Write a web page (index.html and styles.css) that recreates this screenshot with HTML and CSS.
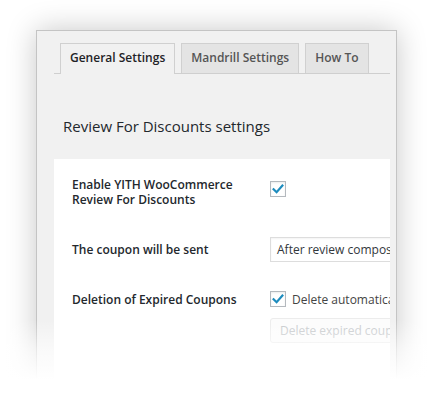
FILE: index.html
```html
<!DOCTYPE html>
<html>
<head>
<meta charset="utf-8">
<link rel="stylesheet" href="styles.css">
</head>
<body>
<div class="stage">
  <div class="panel">
    <nav class="tabs">
      <span class="tab active">General Settings</span>
      <span class="tab">Mandrill Settings</span>
      <span class="tab">How To</span>
    </nav>
    <h2 class="title">Review For Discounts settings</h2>
    <div class="box">
      <div class="row row-first">
        <div class="label">Enable YITH WooCommerce Review For Discounts</div>
        <div class="field">
          <span class="check"><svg viewBox="0 0 16 16" width="16" height="16"><path d="M3.6 8.2 L6.6 11.2 L12.4 4.6" fill="none" stroke="#1e8cbe" stroke-width="2.2" stroke-linecap="square"/></svg></span>
        </div>
      </div>
      <div class="row row-select">
        <div class="label">The coupon will be sent</div>
        <div class="field">
          <div class="select">After review composed</div>
        </div>
      </div>
      <div class="row row-last">
        <div class="label">Deletion of Expired Coupons</div>
        <div class="field">
          <div class="checkline">
            <span class="check"><svg viewBox="0 0 16 16" width="16" height="16"><path d="M3.6 8.2 L6.6 11.2 L12.4 4.6" fill="none" stroke="#1e8cbe" stroke-width="2.2" stroke-linecap="square"/></svg></span>
            <span class="checktext">Delete automatically expired coupons</span>
          </div>
          <div class="btn">Delete expired coupons</div>
        </div>
      </div>
    </div>
  </div>
  <div class="fade"></div>
</div>
</body>
</html>
```

FILE: styles.css
```css
html, body {
  margin: 0;
  padding: 0;
  background: #fff;
}
body {
  font-family: "Open Sans", "Noto Sans", sans-serif;
  color: #23282d;
}
.stage {
  position: relative;
  width: 434px;
  height: 416px;
  overflow: hidden;
  padding: 30px 0 0 36px;
  box-sizing: border-box;
}
.panel {
  width: 359px;
  height: 420px;
  border: 1px solid #c4c4c4;
  background: #f1f1f1;
  box-shadow: 0 0 28px rgba(0, 0, 0, 0.22);
}
.tabs {
  display: flex;
  gap: 6px;
  margin: 12px 6px 0 17px;
  padding-left: 6px;
  border-bottom: 1px solid #cfcfcf;
  height: 30px;
}
.tab {
  display: block;
  box-sizing: border-box;
  height: 30px;
  padding: 0 9px;
  font-size: 12px;
  font-weight: 600;
  line-height: 28px;
  color: #555;
  background: #e4e4e4;
  border: 1px solid #d0d0d0;
  border-bottom: none;
}
.tab.active {
  color: #1f2327;
  background: #f1f1f1;
  height: 31px;
}
.title {
  margin: 41px 0 0 26px;
  font-size: 15px;
  font-weight: 400;
  line-height: 22px;
  color: #23282d;
}
.box {
  margin: 22px 6px 0 17px;
  height: 260px;
  background: #fff;
  padding: 18px 0 0 18px;
  box-sizing: border-box;
  overflow: hidden;
}
.row {
  display: flex;
}
.label {
  width: 180px;
  flex: none;
  font-size: 12px;
  font-weight: 600;
  line-height: 15px;
  color: #23282d;
}
.field {
  margin-left: 18px;
  flex: none;
}
.row-first .field {
  padding-top: 4px;
}
.row-select {
  margin-top: 30px;
  align-items: center;
}
.row-last {
  margin-top: 29px;
}
.row-last .label {
  padding-top: 1px;
}
.check {
  display: block;
  width: 16px;
  height: 16px;
  box-sizing: border-box;
  border: 1px solid #b4b9be;
  background: #fff;
  box-shadow: inset 0 1px 2px rgba(0, 0, 0, 0.08);
  position: relative;
}
.check svg {
  position: absolute;
  left: -1px;
  top: -1px;
}
.select {
  box-sizing: border-box;
  width: 200px;
  height: 25px;
  border: 1px solid #ddd;
  padding-left: 6px;
  font-size: 12px;
  line-height: 23px;
  color: #32373c;
  white-space: nowrap;
  box-shadow: inset 0 1px 2px rgba(0, 0, 0, 0.05);
}
.checkline {
  display: flex;
  align-items: center;
  gap: 6px;
  white-space: nowrap;
  height: 16px;
}
.checktext {
  font-size: 12px;
  color: #444;
}
.btn {
  margin-top: 11px;
  box-sizing: border-box;
  width: 200px;
  height: 25px;
  border: 1px solid #ececec;
  border-radius: 3px;
  padding-left: 9px;
  font-size: 12px;
  line-height: 23px;
  color: #c5c8cb;
  background: #fcfcfc;
  white-space: nowrap;
}
.fade {
  position: absolute;
  left: 0;
  right: 0;
  top: 320px;
  bottom: 0;
  background: linear-gradient(to bottom, rgba(255,255,255,0) 0%, rgba(255,255,255,0.6) 30%, #fff 62%, #fff 100%);
}
```
